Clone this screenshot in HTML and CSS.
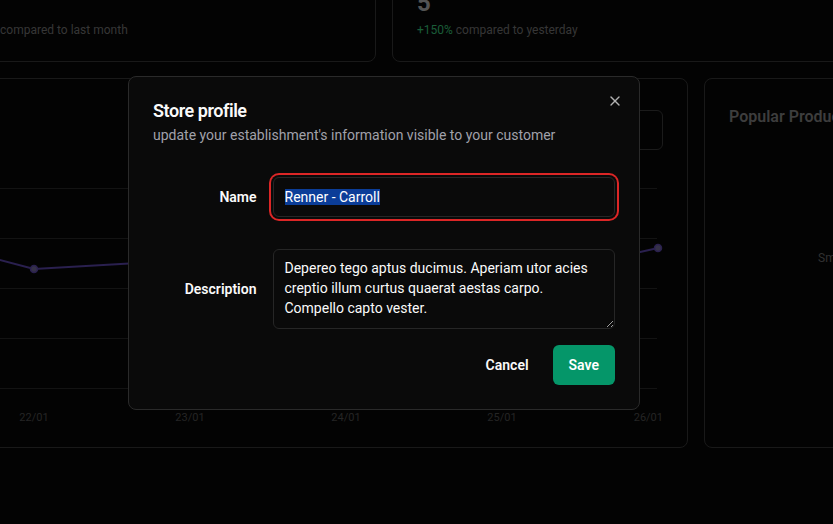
FILE: index.html
```html
<!DOCTYPE html>
<html lang="en">
<head>
<meta charset="utf-8">
<title>Dashboard - Store profile</title>
<link rel="stylesheet" href="styles.css">
</head>
<body>
<main class="dash">
  <section class="stats">
    <article class="card stat">
      <div class="stat-value">34</div>
      <p class="stat-note"><span class="up">+12%</span> compared to last month</p>
    </article>
    <article class="card stat">
      <div class="stat-value">5</div>
      <p class="stat-note"><span class="up">+150%</span> compared to yesterday</p>
    </article>
  </section>

  <section class="charts">
    <article class="card chart-card">
      <header class="chart-head">
        <div class="chart-titles">
          <h3>Revenue in period</h3>
          <p>Daily revenue in the period</p>
        </div>
        <div class="select"></div>
      </header>
      <svg class="chart" width="938" height="257" viewBox="0 0 938 257">
        <g transform="translate(275,-165)">
          <g class="grid">
            <line x1="-275" y1="188.5" x2="657" y2="188.5"/>
            <line x1="-275" y1="238.5" x2="657" y2="238.5"/>
            <line x1="-275" y1="288.5" x2="657" y2="288.5"/>
            <line x1="-275" y1="338.5" x2="657" y2="338.5"/>
            <line x1="-275" y1="388.5" x2="657" y2="388.5"/>
          </g>
          <polyline class="series" points="-122,228 34,269 190,260 346,270 502,283 658,248"/>
          <g class="dots">
            <circle cx="-122" cy="228" r="3.5"/>
            <circle cx="34" cy="269" r="3.5"/>
            <circle cx="190" cy="260" r="3.5"/>
            <circle cx="346" cy="270" r="3.5"/>
            <circle cx="502" cy="283" r="3.5"/>
            <circle cx="658" cy="248" r="3.5"/>
          </g>
          <g class="axis">
            <text x="-122" y="421" text-anchor="middle">21/01</text>
            <text x="34" y="421" text-anchor="middle">22/01</text>
            <text x="190" y="421" text-anchor="middle">23/01</text>
            <text x="346" y="421" text-anchor="middle">24/01</text>
            <text x="502" y="421" text-anchor="middle">25/01</text>
            <text x="663" y="421" text-anchor="end">26/01</text>
          </g>
        </g>
      </svg>
    </article>

    <article class="card popular">
      <h3>Popular Products</h3>
      <svg class="pie" width="372" height="280" viewBox="0 0 372 280">
        <text class="pie-label" x="89" y="127">Smartphone (12)</text>
      </svg>
    </article>
  </section>
</main>

<div class="overlay"></div>

<div class="dialog" role="dialog" aria-labelledby="dlg-title">
  <header class="dialog-header">
    <h2 id="dlg-title">Store profile</h2>
    <p>update your establishment's information visible to your customer</p>
  </header>

  <form class="dialog-form">
    <div class="form-row">
      <label class="form-label" for="name">Name</label>
      <div class="input focused" id="name"><span class="selected">Renner - Carroll</span></div>
    </div>
    <div class="form-row row-desc">
      <label class="form-label" for="description">Description</label>
      <textarea class="textarea" id="description" wrap="off" readonly>Depereo tego aptus ducimus. Aperiam utor acies
creptio illum curtus quaerat aestas carpo.
Compello capto vester.</textarea>
    </div>
    <div class="dialog-footer">
      <button type="button" class="btn btn-ghost">Cancel</button>
      <button type="button" class="btn btn-save">Save</button>
    </div>
  </form>

  <button type="button" class="close" aria-label="Close">
    <svg width="16" height="16" viewBox="0 0 24 24" fill="none" stroke="currentColor" stroke-width="2" stroke-linecap="round">
      <path d="M18 6 6 18"/><path d="m6 6 12 12"/>
    </svg>
  </button>
</div>
</body>
</html>
```
FILE: styles.css
```css
* { box-sizing: border-box; }

html, body {
  margin: 0;
  height: 524px;
  overflow: hidden;
}

body {
  background: #060606;
  font-family: Roboto, "Liberation Sans", sans-serif;
  color: #fafafa;
}

/* ---------- dashboard behind the dialog ---------- */
.dash {
  margin-top: -38px;
  display: flex;
  flex-direction: column;
  gap: 16px;
}

.card {
  border: 1px solid #333333;
  border-radius: 8px;
  background: transparent;
}

.stats {
  display: flex;
  gap: 16px;
  margin-left: -57px;
}

.stat {
  flex: none;
  padding: 24px 24px 21px;
}
.stat:first-child { width: 433px; }
.stat:last-child { width: 470px; }

.stat-value {
  font-size: 24px;
  line-height: 32px;
  font-weight: 700;
  color: #a8a8a8;
}

.stat-note {
  margin: 1px 0 0;
  font-size: 12px;
  line-height: 20px;
  color: #6c6c6c;
  white-space: nowrap;
}

.up { color: #34b870; }

.charts {
  display: flex;
  gap: 16px;
  margin-left: -300px;
}

.chart-card {
  flex: none;
  width: 988px;
  height: 370px;
  padding: 24px;
}

.chart-head {
  height: 54px;
  display: flex;
  align-items: center;
  justify-content: space-between;
}

.chart-titles h3 {
  margin: 0;
  font-size: 16px;
  line-height: 24px;
  font-weight: 600;
  color: #7a7a7a;
}
.chart-titles p {
  margin: 4px 0 0;
  font-size: 14px;
  line-height: 20px;
  color: #505050;
}

.select {
  width: 240px;
  height: 40px;
  border: 1px solid #363636;
  border-radius: 6px;
}

.chart {
  display: block;
  margin-top: 8px;
}

.grid line {
  stroke: #262626;
  stroke-width: 1;
}

.series {
  fill: none;
  stroke: #54409e;
  stroke-width: 2;
}

.dots circle {
  fill: #6a6290;
  stroke: #54409e;
  stroke-width: 1.5;
}

.axis text {
  font-family: Roboto, sans-serif;
  font-size: 11px;
  fill: #4a4a4a;
}

.popular {
  flex: none;
  width: 420px;
  height: 370px;
  padding: 26px 24px 24px;
}

.popular h3 {
  margin: 0;
  font-size: 16px;
  line-height: 24px;
  font-weight: 600;
  color: #7a7a7a;
  white-space: nowrap;
}

.pie {
  display: block;
  margin-top: 6px;
}

.pie-label {
  font-family: Roboto, sans-serif;
  font-size: 12px;
  fill: #626262;
}

/* ---------- overlay + dialog ---------- */
.overlay {
  position: fixed;
  inset: 0;
  background: rgba(0, 0, 0, 0.5);
}

.dialog {
  position: fixed;
  left: 128px;
  top: 76px;
  width: 512px;
  display: grid;
  gap: 16px;
  padding: 24px;
  background: #0a0a0a;
  border: 1px solid #2a2a2a;
  border-radius: 8px;
}

.dialog-header {
  display: flex;
  flex-direction: column;
  gap: 5px;
}

.dialog-header h2 {
  margin: 0;
  padding-top: 1px;
  font-size: 18px;
  line-height: 18px;
  font-weight: 600;
  letter-spacing: -0.025em;
  color: #fafafa;
}

.dialog-header p {
  margin: 0;
  font-size: 14px;
  line-height: 20px;
  color: #a1a1aa;
}

.dialog-form {
  display: flex;
  flex-direction: column;
  padding-top: 16px;
}

.form-row {
  display: grid;
  grid-template-columns: repeat(4, 1fr);
  column-gap: 16px;
  align-items: center;
}

.row-desc { margin-top: 32px; }

.form-label {
  text-align: right;
  font-size: 14px;
  line-height: 20px;
  font-weight: 600;
  color: #fafafa;
}

.input {
  grid-column: span 3;
  height: 40px;
  display: flex;
  align-items: center;
  padding: 0 11px;
  border: 1px solid #262626;
  border-radius: 6px;
  background: #0a0a0a;
  font-size: 14px;
  color: #fafafa;
}

.input.focused {
  box-shadow: 0 0 0 2px #0a0a0a, 0 0 0 4px #dc2626;
}

.selected {
  background: #0b3d98;
  color: #ffffff;
}

.textarea {
  grid-column: span 3;
  display: block;
  width: 100%;
  height: 80px;
  padding: 8px 11px;
  border: 1px solid #262626;
  border-radius: 6px;
  background: #0a0a0a;
  color: #fafafa;
  font-family: inherit;
  font-size: 14px;
  line-height: 20px;
  overflow: hidden;
  resize: vertical;
  color-scheme: dark;
  outline: none;
}

.dialog-footer {
  margin-top: 16px;
  display: flex;
  justify-content: flex-end;
  gap: 8px;
}

.btn {
  height: 40px;
  padding: 0 16px;
  border: 0;
  border-radius: 6px;
  font-family: inherit;
  font-size: 14px;
  font-weight: 600;
  cursor: pointer;
}

.btn-ghost {
  background: transparent;
  color: #fafafa;
}

.btn-save {
  background: #059669;
  color: #ffffff;
}

.close {
  position: absolute;
  right: 16px;
  top: 16px;
  width: 16px;
  height: 16px;
  padding: 0;
  border: 0;
  background: transparent;
  color: #fafafa;
  opacity: 0.7;
  display: flex;
  cursor: pointer;
}
.close svg { width: 16px; height: 16px; }
```
